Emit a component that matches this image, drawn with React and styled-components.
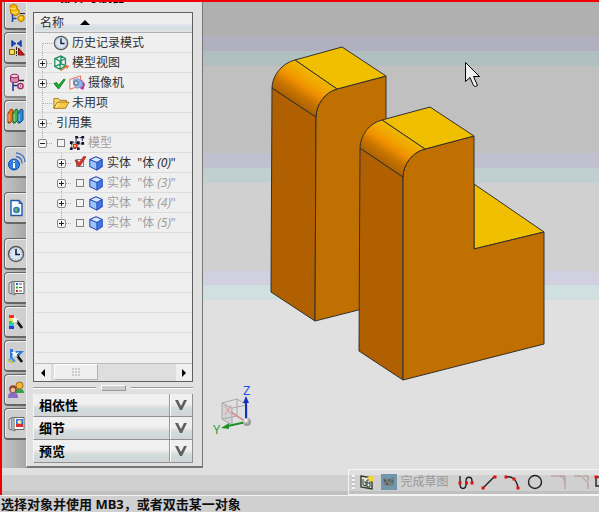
import React from "react";
import styled, { createGlobalStyle, css } from "styled-components";

const GlobalStyle = createGlobalStyle`
  * { box-sizing: border-box; }
  body { margin: 0; background: #fff; }
  button { font: inherit; color: inherit; padding: 0; margin: 0; border: 0; background: none; }
`;

const Page = styled.div`
  display: flex;
  flex-direction: column;
  height: 100vh;
  padding: 0 2px 2px 0;
  overflow: hidden;
  color: #303030;
  font: 12px/20px "Noto Sans", "Noto Sans CJK SC", sans-serif;
`;

const Frame = styled.div`
  flex: 1;
  min-height: 0;
  display: flex;
  flex-direction: column;
  border-top: 2px solid #f00000;
  border-left: 2px solid #f00000;
`;

const Workspace = styled.main`
  flex: 1;
  min-height: 0;
  display: flex;
`;

const TabRail = styled.nav`
  flex: none;
  width: 24px;
  display: flex;
  flex-direction: column;
  gap: 2px;
  padding-left: 2px;
  background: linear-gradient(90deg, #c4c4c4, #a8a8a8);
`;

const RailTab = styled.button`
  display: flex;
  flex: none;
  align-items: center;
  justify-content: center;
  height: ${(p) => (p.$first ? 28 : 32)}px;
  margin-top: ${(p) => (p.$apart ? 12 : 0)}px;
  border: 1px solid #666;
  border-bottom-width: 2px;
  border-right: 0;
  border-top-width: ${(p) => (p.$first ? 0 : 1)}px;
  border-radius: ${(p) => (p.$first ? "0 0 0 4px" : "4px 0 0 4px")};
  box-shadow: inset 1px 1px 0 #eee;
  background: #cfcfcf;
  ${(p) =>
    p.$active &&
    css`
      border-color: #888;
      background: #e2e2e2;
    `}
`;

const Icon = styled.svg`
  flex: none;
  display: block;
  overflow: visible;
  width: ${(p) => p.$size || 18}px;
  height: ${(p) => p.$size || 18}px;
`;

const Panel = styled.aside`
  flex: none;
  width: 177px;
  display: flex;
  flex-direction: column;
  padding: 0 9px 3px 6px;
  background: #e0e0e0;
  border-left: 1px solid #f0f0f0;
  border-right: 1px solid #777;
  border-bottom: 2px solid #777;
`;

const PanelTitle = styled.h1`
  flex: none;
  display: flex;
  align-items: flex-end;
  height: 10px;
  margin: 0;
  padding-left: 27px;
  overflow: hidden;
  white-space: nowrap;
  color: #000;
  font-size: 13px;
  line-height: 32px;
`;

const TreeBox = styled.section`
  flex: 1;
  min-height: 0;
  display: flex;
  flex-direction: column;
  padding: 1px 0 0 1px;
  border: 1px solid #606060;
  background: #efefef;
`;

const TreeHeader = styled.button`
  flex: none;
  display: flex;
  align-items: center;
  gap: 16px;
  height: 19px;
  padding-left: 5px;
  border-bottom: 1px solid #b0b0b0;
  background: linear-gradient(#eee 0 55%, #dde3ea 60%, #d4dde0 80%, #e4e4e4);
`;

const Rows = styled.ul`
  flex: 1;
  min-height: 0;
  overflow: hidden;
  margin: 0;
  padding: 0;
  list-style: none;
  background: repeating-linear-gradient(#efefef 0 19px, #dcdcdc 19px 20px);
`;

const Row = styled.li`
  display: flex;
  align-items: center;
  height: 20px;
  padding-left: ${(p) => (p.$child ? 22 : 3)}px;
  white-space: pre;
  color: ${(p) => (p.$dim ? "#a0a0a0" : "#303030")};
`;

const Guide = styled.span`
  flex: none;
  display: flex;
  align-items: center;
  width: 14px;
  height: 20px;
  background-repeat: no-repeat;
  background-image: repeating-linear-gradient(#b0b0b0 0 1px, transparent 1px 2px),
    repeating-linear-gradient(90deg, #b0b0b0 0 1px, transparent 1px 2px);
  background-size: 1px ${(p) => (p.$span === "all" ? 20 : 10)}px, 9px 1px;
  background-position: 4px ${(p) => (p.$span === "lower" ? 10 : 0)}px, 5px 10px;
`;

const Expander = styled.button`
  display: block;
  width: 9px;
  height: 9px;
  border: 1px solid #888;
  border-radius: 2px;
  background: linear-gradient(#222, #222) 1px 3px / 5px 1px no-repeat,
    ${(p) => (p.$open ? "" : "linear-gradient(#222, #222) 3px 1px / 1px 5px no-repeat,")} #f4f4f4;
`;

const Item = styled.label`
  display: flex;
  align-items: center;
  gap: 3px;
  padding-left: ${(p) => p.$pad}px;
`;

const Tick = styled.input`
  appearance: none;
  flex: none;
  width: 8px;
  height: 8px;
  margin: 0 1px 0 0;
  border: 1px solid #808080;
  background: #f4f4f4;
`;

const TickWrap = styled.span`
  position: relative;
  display: flex;
`;

const RedMark = styled.svg`
  position: absolute;
  left: -2px;
  top: -3px;
  width: 12px;
  height: 11px;
`;

const ScrollBar = styled.div`
  flex: none;
  display: flex;
  align-items: stretch;
  height: 18px;
  border-top: 1px solid #bbb;
  background: #dedede;
`;

const ScrollArrow = styled.button`
  display: flex;
  align-items: center;
  justify-content: center;
  width: 16px;
  margin-left: ${(p) => (p.$end ? "auto" : 0)};
  background: #efefef;
`;

const ScrollThumb = styled.div`
  display: flex;
  align-items: center;
  justify-content: center;
  width: 44px;
  margin: 0 0 1px 3px;
  border: 1px solid #b0b0b0;
  border-top-color: #fff;
  border-left-color: #fff;
  background: #efefef;
`;

const Splitter = styled.div`
  flex: none;
  display: flex;
  align-items: center;
  gap: 5px;
  height: 12px;
`;

const SplitLine = styled.span`
  flex: 1;
  height: 2px;
  border-top: 1px solid #999;
  background: #fff;
`;

const SplitHandle = styled.span`
  width: 25px;
  height: 6px;
  border: 1px solid #999;
  border-top-color: #fff;
  border-left-color: #fff;
  background: #ccc;
`;

const Section = styled.button`
  flex: none;
  display: flex;
  align-items: stretch;
  height: 23px;
  border: 1px solid #909090;
  border-top: 0;
  border-left-color: #f4f4f4;
  background: linear-gradient(#f0f0f0 0 45%, #dedede 60%, #cfdcdc 70%, #d4d4d4);
`;

const SectionLabel = styled.span`
  flex: 1;
  padding: 1px 0 0 5px;
  text-align: left;
  color: #000;
  font-weight: 700;
  font-size: 13px;
  line-height: 20px;
`;

const SectionArrow = styled.span`
  display: flex;
  align-items: center;
  justify-content: center;
  width: 23px;
  border-left: 1px solid #999;
  box-shadow: inset 1px 0 0 #fff;
`;

const Viewport = styled.section`
  flex: 1;
  min-width: 0;
  overflow: hidden;
  background: linear-gradient(
    #b0b0b0 0 34px, #b0b0c0 34px 49px, #b0c0c0 49px 64px,
    #c0c0c0 64px 151px, #c0c0d0 151px 166px, #c0d0d0 166px 181px,
    #d0d0d0 181px 269px, #d0d0e0 269px 283px, #d0e0e0 283px 298px, #e0e0e0 298px
  );
`;

const Scene = styled.svg`
  display: block;
  width: 100%;
  height: 100%;
  font: 13px "Noto Sans", sans-serif;
`;

const Dock = styled.footer`
  flex: none;
  display: flex;
  justify-content: flex-end;
  padding-top: 1px;
  background: linear-gradient(#e0e0e0 0 7px, #d0d0d0 7px 23px, #c0c0c0 23px);
`;

const Toolbar = styled.div`
  display: flex;
  align-items: center;
  height: 26px;
  padding-left: 3px;
  border: 1px solid #f4f4f4;
  border-right: 0;
  color: #989898;
`;

const Grip = styled.span`
  width: 3px;
  height: 15px;
  margin-right: 5px;
  background: repeating-linear-gradient(#f4f4f4 0 2px, #c4c4c4 2px 4px);
`;

const Tool = styled.button`
  flex: none;
  display: flex;
  align-items: center;
  justify-content: ${(p) => (p.$cut ? "flex-start" : "center")};
  gap: 3px;
  width: ${(p) => p.$w || 23}px;
  height: 22px;
  overflow: hidden;
  color: inherit;
  white-space: nowrap;
`;

const Status = styled.div`
  flex: none;
  height: 17px;
  padding-left: 1px;
  overflow: hidden;
  border-top: 1px solid #f4f4f4;
  background: #d0d0d0;
  color: #101010;
  font-weight: 700;
  font-size: 13px;
  line-height: 17px;
  white-space: nowrap;
`;

const Clock = () => (
  <>
    <circle cx="9" cy="9" r="7.5" fill="#dbe6f5" stroke="#5c5c5c" strokeWidth="1.5" />
    <circle cx="9" cy="9" r="5.8" fill="none" stroke="#8799ad" strokeDasharray="1 2" />
    <path d="M9 4v5.5h4" fill="none" stroke="#102040" strokeWidth="1.6" />
  </>
);

const Wand = () => (
  <>
    <path d="M9 7l6 8" stroke="#111" strokeWidth="2.6" />
    <path d="M8 3l1 3 3-1-2 3 1 2-3-1-3 1 1-3-2-2h3z" fill="#f6f6f6" />
  </>
);

const Pages = () => (
  <>
    <path d="M2 4l3-1v12l-3-1z" fill="#ddd" stroke="#777" />
    <path d="M5 2l3 1v13l-3-1z" fill="#eee" stroke="#777" />
    <path d="M7 2.5h10v12H7z" fill="#fafafa" stroke="#666" />
  </>
);

const railIcons = {
  assembly: (
    <>
      <path d="M3 0l4-2 3 2v3l2 1v4l-4 2-4-2z" fill="#f5b600" stroke="#b87800" />
      <path d="M3 2l3 1 3-1M5 6l3 1 3-1" fill="none" stroke="#ffe98a" />
      <path d="M5.500 8v8M5.500 12.500h4" fill="none" stroke="#1747a8" strokeWidth="1.500" />
      <path d="M13 7.500h5" stroke="#222" />
      <path d="M11 11l3-2 3 1v4l-3 2-3-2z" fill="#f5b600" stroke="#b87800" />
      <circle cx="14" cy="12" r="1" fill="#fff0a0" />
    </>
  ),
  constraint: (
    <>
      <path d="M5 2l4 2.500L5 7zM14 2l-4 2.500L14 7z" fill="#1d49c4" stroke="#1d49c4" />
      <path d="M5 1v7M14 1v7" stroke="#10308a" />
      <path d="M9.500 8v9" stroke="#222" strokeDasharray="3 1" />
      <path d="M2.500 10.500h5v5h-5z" fill="#f5e050" stroke="#7a6400" />
      <path d="M11.500 9v7h6z" fill="#d01818" stroke="#801010" />
    </>
  ),
  part: (
    <>
      <path d="M3.500 3v5c0 2 8 2 8 0V3" fill="#d58ab0" stroke="#8c2458" />
      <ellipse cx="7.500" cy="3" rx="4" ry="1.800" fill="#f3cfe0" stroke="#8c2458" />
      <path d="M12 7.500h5" stroke="#222" strokeWidth="1.500" />
      <path d="M6 10v8M6 12.500h5" fill="none" stroke="#26348c" strokeWidth="1.500" />
      <circle cx="13.500" cy="13" r="2.600" fill="#f8dcea" stroke="#a03068" strokeWidth="1.500" />
      <circle cx="13.500" cy="13" r=".8" fill="#a03068" />
    </>
  ),
  library: (
    <>
      <path d="M1 6l3-4 2 1v10l-3 3H1z" fill="#ee7420" stroke="#903800" />
      <path d="M6 6l3-4 2 1v10l-3 3H6z" fill="#42b34c" stroke="#15692a" />
      <path d="M11 6l3-4 2 1v10l-3 3h-2z" fill="#2688cf" stroke="#124f88" />
      <path d="M2 7v7M7 7v7M12 7v7" stroke="#fff" opacity=".6" />
    </>
  ),
  info: (
    <>
      <circle cx="7" cy="11.500" r="5.500" fill="#2b80e0" stroke="#114e9f" />
      <path d="M7 10v5M7 7.500v1.600" stroke="#fff" strokeWidth="2" />
      <path d="M9 3.500c4 .5 6 3 6 7M9 0c6 .500 9 4.500 9 9" fill="none" stroke="#4474bd" strokeWidth="1.400" />
    </>
  ),
  document: (
    <>
      <path d="M4 1.500h8l3 3v12H4z" fill="#f7faff" stroke="#2458a8" strokeWidth="1.400" />
      <path d="M12 1.500v3h3" fill="none" stroke="#2458a8" />
      <circle cx="9.500" cy="11" r="3.300" fill="#2c73c0" />
      <path d="M7.500 10l2-1.500 1.500 2-1 2.500-1.500.5z" fill="#55c050" />
    </>
  ),
  history: <Clock />,
  palette: (
    <>
      <Pages />
      <path d="M9 5h2" stroke="#2060d0" strokeWidth="2" />
      <path d="M9 8.500h2" stroke="#20b030" strokeWidth="2" />
      <path d="M9 12h2" stroke="#d02020" strokeWidth="2" />
      <path d="M12 5h3M12 8.500h3M12 12h3" stroke="#555" />
    </>
  ),
  colors: (
    <>
      <path d="M2 2h5v3H2z" fill="#f03020" />
      <path d="M2 5h5v3H2z" fill="#f8e020" />
      <path d="M2 8h5v3H2z" fill="#30d040" />
      <path d="M2 11h5v2H2z" fill="#20d0e0" />
      <path d="M2 13h5v3H2z" fill="#2040e0" />
      <Wand />
    </>
  ),
  process: (
    <>
      <path d="M3 2h3v9H3zM7 4h10l-5 5H7z" fill="#2f7ad8" />
      <path d="M1 13l4-3 4 4-4 2z" fill="#3b9adf" />
      <path d="M1 15l3-2 2 3" fill="none" stroke="#e8c428" strokeWidth="1.500" />
      <Wand />
    </>
  ),
  roles: (
    <>
      <path d="M8 12c0-4 2-4 4-4s5 0 5 4z" fill="#36a048" />
      <circle cx="12.500" cy="4.500" r="3.500" fill="#f2b73c" stroke="#a56614" />
      <path d="M1 17c0-5 2-6 5-6s5 1 5 6z" fill="#8b6cc0" />
      <circle cx="6" cy="8" r="3.800" fill="#8f4430" />
      <circle cx="6" cy="9" r="2.300" fill="#f0c09c" />
    </>
  ),
  scenes: (
    <>
      <Pages />
      <path d="M9 4h7v8H9z" fill="#3c78d8" />
      <path d="M9 9h7v3H9z" fill="#d83030" />
      <circle cx="12.500" cy="7" r="2" fill="#f8e8a0" />
    </>
  ),
};

const rail = [
  { id: "assembly", name: "装配导航器", first: true },
  { id: "constraint", name: "约束导航器" },
  { id: "part", name: "部件导航器", active: true },
  { id: "library", name: "重用库" },
  { id: "info", name: "信息", apart: true },
  { id: "document", name: "浏览器", apart: true },
  { id: "history", name: "历史记录", apart: true },
  { id: "palette", name: "系统材料" },
  { id: "colors", name: "可视化" },
  { id: "process", name: "加工向导" },
  { id: "roles", name: "角色" },
  { id: "scenes", name: "系统场景" },
];

const treeIcons = {
  clock: <Clock />,
  view: (
    <>
      <path d="M2 4l7-3 5 3v8l-6 4-6-3zM2 4l6 3v9M8 7l6-3M9 1v9l5 2M9 10l-7 3" fill="none" stroke="#159060" strokeWidth="1.400" />
      <path d="M8 17l6-4-1-2 5 1-2 4-1-2-6 4z" fill="#f06a20" />
    </>
  ),
  camera: (
    <>
      <path d="M1 5l12-4v11L1 16z" fill="#f8f4f4" stroke="#e85c4c" />
      <path d="M14 5l4 5-2 7-5-3z" fill="#c428a0" />
      <path d="M5 5l6-1 4 4v5l-6 2-4-4z" fill="#8fb5e2" stroke="#7f9fcb" />
      <circle cx="8" cy="9" r="2.300" fill="#d5e6fa" stroke="#456" />
    </>
  ),
  folder: (
    <>
      <path d="M1 15V4h5l2 2h7v3" fill="#f8d86c" stroke="#a07010" />
      <path d="M1 15l4-7h13l-4 7z" fill="#f8cc48" stroke="#a07010" />
      <path d="M3 14l3-5" stroke="#fff" />
    </>
  ),
  model: (
    <>
      <path d="M8 3h7v7H8zM3 8h7v7H3z" fill="none" stroke="#111130" strokeDasharray="3 1" />
      <path d="M7 1h3v3H7zM14 1h3v3h-3zM14 8h3v3h-3zM1 7h3v3H1zM1 14h3v3H1zM9 14h3v3H9zM9 7h3v3H9z" fill="#111130" />
      <path d="M5 10.500h3.500V14H5z" fill="#f8e050" stroke="#e03020" strokeWidth="1.400" />
    </>
  ),
  body: (
    <>
      <path d="M2 5l7-3 7 3-6 3.500z" fill="#d8ebff" />
      <path d="M2 5l8 3.500V17l-8-4z" fill="#9cc4fa" />
      <path d="M16 5l-6 3.500V17l6-4z" fill="#4278e0" />
      <path d="M2 5l7-3 7 3v8l-6 4-8-4zM2 5l8 3.500L16 5M10 8.500V17" fill="none" stroke="#2850c0" strokeWidth="1.200" strokeLinejoin="round" />
    </>
  ),
};

const tree = [
  { text: "历史记录模式", icon: "clock", span: "lower", leaf: true },
  { text: "模型视图", icon: "view" },
  { text: "摄像机", icon: "camera", mark: true },
  { text: "未用项", icon: "folder", leaf: true },
  { text: "引用集" },
  { text: "模型", icon: "model", span: "upper", open: true, dim: true, tick: true },
];

const bodies = [
  { n: 0, on: true },
  { n: 3 },
  { n: 4 },
  { n: 5 },
];

const GreenMark = () => (
  <Icon $size={13} viewBox="0 0 14 14">
    <path d="M1 7l3-1 2 3 6-7 1 1-7 10z" fill="#18b030" stroke="#0b7d20" />
  </Icon>
);

const Tree = () => (
  <Rows>
    {tree.map((r) => (
      <Row key={r.text} $dim={r.dim}>
        <Guide $span={r.span || "all"}>
          {!r.leaf && <Expander $open={r.open} aria-label={"展开" + r.text} />}
        </Guide>
        <Item as={r.tick ? "label" : "span"} $pad={r.tick ? 5 : r.icon ? 1 : 4}>
          {r.tick && <Tick type="checkbox" />}
          {r.mark && <GreenMark />}
          {r.icon && (
            <Icon $size={16} viewBox="0 0 18 18">
              {treeIcons[r.icon]}
            </Icon>
          )}
          {r.text}
        </Item>
      </Row>
    ))}
    {bodies.map((b) => (
      <Row key={b.n} $child $dim={!b.on}>
        <Guide $span={b.n === 5 ? "upper" : "all"}>
          <Expander aria-label={"展开实体" + b.n} />
        </Guide>
        <Item $pad={5}>
          <TickWrap>
            <Tick type="checkbox" defaultChecked={b.on} />
            {b.on && (
              <RedMark viewBox="0 0 12 11">
                <path d="M1 4l3 1 1 2 5-7 2 1-6 9H4z" fill="#e03828" stroke="#901810" strokeWidth=".6" />
              </RedMark>
            )}
          </TickWrap>
          <Icon $size={16} viewBox="0 0 18 18">{treeIcons.body}</Icon>
          <span>
            {'实体  "体 '}
            <em>({b.n})</em>"
          </span>
        </Item>
      </Row>
    ))}
  </Rows>
);

const Model = () => (
  <Scene role="img" aria-label="三维模型">
    <defs>
      <linearGradient id="fillet-back" gradientUnits="userSpaceOnUse" x1="295" y1="60" x2="276" y2="89">
        <stop offset="0" stopColor="#f0b800" />
        <stop offset=".3" stopColor="#f0a400" />
        <stop offset=".5" stopColor="#f09000" />
        <stop offset=".75" stopColor="#c87400" />
        <stop offset="1" stopColor="#b06400" />
      </linearGradient>
      <linearGradient id="fillet-front" gradientUnits="userSpaceOnUse" x1="382" y1="120" x2="363" y2="149">
        <stop offset="0" stopColor="#f0b800" />
        <stop offset=".3" stopColor="#f0a400" />
        <stop offset=".5" stopColor="#f09000" />
        <stop offset=".75" stopColor="#c87400" />
        <stop offset="1" stopColor="#b06400" />
      </linearGradient>
      <radialGradient id="ball" cx=".35" cy=".3">
        <stop offset="0" stopColor="#fff" />
        <stop offset="1" stopColor="#999" />
      </radialGradient>
    </defs>
    <g transform="translate(-203 -2)" stroke="#33302c" strokeWidth="1" strokeLinejoin="round">
      <path d="M272 88L316 117L315 321L271 292Z" fill="#b06000" />
      <path d="M316 117C316 105 325 92 337 89L386 76V303L315 321Z" fill="#c07000" />
      <path d="M295 60L342 47L386 76L337 89Z" fill="#f0c000" />
      <path d="M272 88C272 76 282 63 295 60L337 89C325 92 316 105 316 117Z" fill="url(#fillet-back)" />
      <path d="M360 148L403 177V380L359 351Z" fill="#b06000" />
      <path d="M474 184L544 232L474 249Z" fill="#f0c000" />
      <path d="M403 177C403 165 412 152 425 149L474 136V249L544 232V344L403 380Z" fill="#c07000" />
      <path d="M382 120L430 107L474 136L425 149Z" fill="#f0c000" />
      <path d="M360 148C360 136 369 123 382 120L425 149C412 152 403 165 403 177Z" fill="url(#fillet-front)" />
      <g fill="none">
        <path d="M222 403L232 408V425L222 419Z" fill="#c8c8c8" fillOpacity=".6" stroke="none" />
        <path d="M222 403L237 399L247 405L232 408ZM222 419L237 416L247 422L232 425ZM222 403V419M237 399V416M247 405V422M232 408V425" stroke="#a8a8a8" />
        <path d="M246 422L231 412" stroke="#d09898" strokeWidth="2" />
        <path d="M225 406L231 414M231 405L225 415" stroke="#e09898" />
        <path d="M246 421V401" stroke="#1030c0" strokeWidth="2" />
        <path d="M246 422L228 426" stroke="#209028" strokeWidth="2" />
      </g>
      <path d="M246 396L249 403H243Z" fill="#1030c0" stroke="none" />
      <path d="M221 428L229 423V429Z" fill="#209028" stroke="none" />
      <circle cx="247" cy="422" r="4" fill="url(#ball)" stroke="none" />
      <text x="243" y="395" fill="#2050f0" stroke="none">Z</text>
      <text x="213" y="434" fill="#30a040" stroke="none">Y</text>
      <path d="M465.500 62.500V81.500L470 77.500L473.500 85.500Q475 87.500 477.500 85.500L473.500 76.500H479.500Z" fill="#f0f0f0" stroke="#000" />
    </g>
  </Scene>
);

const dot = (x, y) => <path key={`${x}-${y}`} d={`M${x - 1.5} ${y - 1.5}h3v3h-3z`} fill="#e01010" />;

const curveTools = [
  {
    name: "轮廓",
    art: (
      <>
        <path d="M3 3v8c0 6 6 6 6 0V8c0-5 6-5 6 0v3" fill="none" stroke="#222" strokeWidth="1.400" />
        {dot(3, 10)}{dot(9.5, 10)}{dot(15, 10)}
      </>
    ),
  },
  {
    name: "直线",
    art: (
      <>
        <path d="M3 15L15 3" stroke="#222" strokeWidth="1.400" />
        {dot(3, 15)}{dot(15, 4)}
      </>
    ),
  },
  {
    name: "圆弧",
    art: (
      <>
        <path d="M2 4q11-2 13 11" fill="none" stroke="#222" strokeWidth="1.400" />
        {dot(3, 4)}{dot(11, 6)}{dot(15, 15)}
      </>
    ),
  },
  { name: "圆", art: <circle cx="9" cy="9" r="6.500" fill="none" stroke="#222" strokeWidth="1.400" /> },
  { name: "圆角", art: <path d="M2 3h7q7 0 7 7v6M11 3h5v5" fill="none" stroke="#b09090" /> },
  { name: "倒斜角", art: <path d="M2 3h7l7 7v6M11 3h5v5" fill="none" stroke="#b09090" /> },
];

export default function App() {
  return (
    <Page>
      <GlobalStyle />
      <Frame>
        <Workspace>
          <TabRail>
            {rail.map((t) => (
              <RailTab key={t.id} $first={t.first} $active={t.active} $apart={t.apart} aria-label={t.name}>
                <Icon viewBox="0 0 18 18">{railIcons[t.id]}</Icon>
              </RailTab>
            ))}
          </TabRail>
          <Panel>
            <PanelTitle>部件导航器</PanelTitle>
            <TreeBox>
              <TreeHeader>
                名称
                <Icon $size={10} viewBox="0 0 10 10"><path d="M0 7l5-5 5 5z" fill="#000" /></Icon>
              </TreeHeader>
              <Tree />
              <ScrollBar>
                <ScrollArrow aria-label="向左滚动">
                  <Icon $size={8} viewBox="0 0 8 8"><path d="M6 0v8L2 4z" fill="#000" /></Icon>
                </ScrollArrow>
                <ScrollThumb>
                  <Icon $size={8} viewBox="0 0 8 8">
                    <path d="M0 1h8M0 4h8M0 7h8" stroke="#aaa" strokeDasharray="2 1" />
                  </Icon>
                </ScrollThumb>
                <ScrollArrow $end aria-label="向右滚动">
                  <Icon $size={8} viewBox="0 0 8 8"><path d="M2 0v8l4-4z" fill="#000" /></Icon>
                </ScrollArrow>
              </ScrollBar>
            </TreeBox>
            <Splitter>
              <SplitLine />
              <SplitHandle />
              <SplitLine />
            </Splitter>
            {["相依性", "细节", "预览"].map((s) => (
              <Section key={s}>
                <SectionLabel>{s}</SectionLabel>
                <SectionArrow>
                  <Icon $size={12} viewBox="0 0 12 12">
                    <path d="M0 1h3l3 6 3-6h3L7 11H5z" fill="#606060" />
                  </Icon>
                </SectionArrow>
              </Section>
            ))}
          </Panel>
          <Viewport>
            <Model />
          </Viewport>
        </Workspace>
        <Dock>
          <Toolbar>
            <Grip />
            <Tool $w={16} aria-label="草图">
              <Icon $size={16} viewBox="0 0 16 16">
                <path d="M1 2l11 2v11L1 13z" fill="#e8ecd8" stroke="#303830" strokeWidth="1.400" />
                <path d="M3 5v6l3 1V8H4M7 6h3v7H7zM7 9h3" fill="none" stroke="#303830" />
                <path d="M11 0l1 3 3 0-2 2 1 3-3-1-2 1 0-3-2-2 3 0z" fill="#f8d820" />
              </Icon>
            </Tool>
            <Tool $w={78}>
              <Icon $size={16} viewBox="0 0 16 16">
                <path d="M0 0h16v16H0z" fill="#7197ad" />
                <path d="M2 4l5 1 6-2v8l-5 1-5-1z" fill="#747c80" />
                <path d="M3 5l2 1v2H3zM7 6l2-1v2H7zM10 7l2-1v2h-2zM5 9h2v2H5z" fill="#555" />
              </Icon>
              完成草图
            </Tool>
            {curveTools.map((t) => (
              <Tool key={t.name} aria-label={t.name}>
                <Icon viewBox="0 0 18 18">{t.art}</Icon>
              </Tool>
            ))}
            <Tool $w={7} $cut aria-label="矩形">
              <Icon viewBox="0 0 18 18">
                <path d="M4 4h11v9H4z" fill="none" stroke="#222" strokeWidth="1.400" />
                {dot(4, 4)}
              </Icon>
            </Tool>
          </Toolbar>
        </Dock>
      </Frame>
      <Status role="status">选择对象并使用 MB3，或者双击某一对象</Status>
    </Page>
  );
}
